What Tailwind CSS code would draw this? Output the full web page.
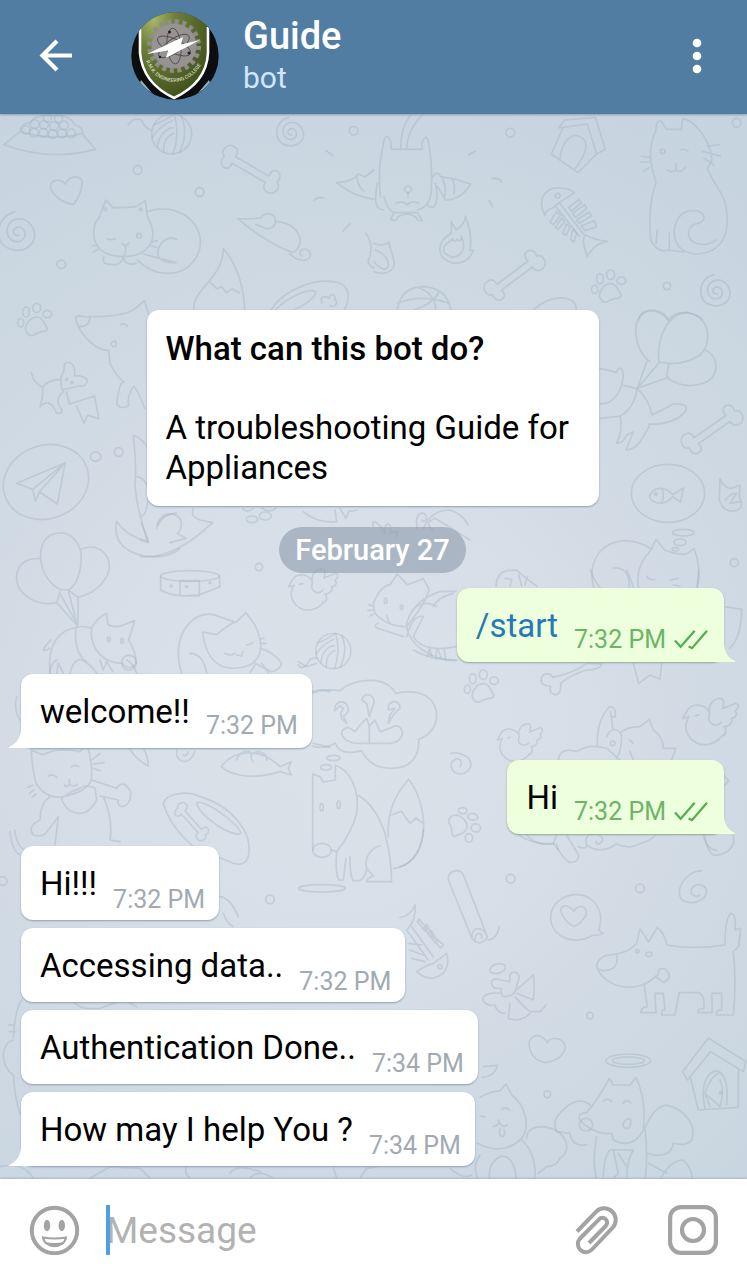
<!DOCTYPE html>
<html lang="en">
<head>
<meta charset="utf-8">
<meta name="viewport" content="width=device-width, initial-scale=1">
<title>Guide</title>
<script src="https://cdn.jsdelivr.net/npm/@tailwindcss/browser@4"></script>
</head>
<body class="flex min-h-screen flex-col bg-[#d3dde6] font-[Roboto,'Liberation_Sans',sans-serif] text-black">

<header class="relative z-10 flex h-[114px] shrink-0 items-center bg-[#517da2] px-6 pb-[2px] shadow-[0_1px_2px_#8c9cab]">
  <button type="button" aria-label="Back" class="flex size-16 items-center justify-center">
    <svg class="size-9" viewBox="0 0 36 36" fill="none" stroke="#fff" stroke-width="4.2"><path d="M34 17.5H5M19 3 4.500 17.500 19 32"/></svg>
  </button>
  <svg class="ml-[43px] size-[88px] shrink-0" viewBox="131 11 88 88">
    <defs>
      <clipPath id="disc"><circle cx="175" cy="55" r="43.700"/></clipPath>
      <radialGradient id="olive" cx=".2" cy=".12" r=".9"><stop offset="0" stop-color="#a9b76c"/><stop offset=".35" stop-color="#6f7f3a"/><stop offset="1" stop-color="#44541e"/></radialGradient>
      <path id="motto" d="M146 60Q154 80 174 81Q194 80 204 58"/>
    </defs>
    <g clip-path="url(#disc)">
      <rect x="131" y="11" width="88" height="88" fill="#0b0d0e"/>
      <path d="M131 11H219V26H208L175 15 140 30H131Z" fill="#6f8038"/>
      <path d="M141 79l11 13-13-8zM209 79l-11 13 13-8z" fill="#8eb0c4"/>
      <path d="M140 8H208V52C207 74 193 88 174 97C155 88 142 74 140 52Z" fill="url(#olive)"/>
      <path d="M140 28V52C142 74 155 88 174 97C193 88 207 74 208 52V26" fill="none" stroke="#fff" stroke-width="2.600"/>
      <circle cx="174" cy="45" r="24.500" fill="none" stroke="#8f8d8c" stroke-width="5" stroke-dasharray="4 3.696"/>
      <circle cx="174" cy="45" r="22.500" fill="#969392"/>
      <g fill="none" stroke="#4b4646" stroke-width=".8"><ellipse cx="174" cy="45" rx="18" ry="7" transform="rotate(25 174 45)"/><ellipse cx="174" cy="45" rx="18" ry="7" transform="rotate(85 174 45)"/><ellipse cx="174" cy="45" rx="18" ry="7" transform="rotate(145 174 45)"/></g>
      <circle cx="169.500" cy="31" r="1.500" fill="#222"/><circle cx="189" cy="52" r="1.500" fill="#222"/><circle cx="160" cy="56" r="1.300" fill="#222"/>
      <path d="M147 53L183 36 181 43.500 200 39 166 57 168 49.500Z" fill="#fff"/>
      <text class="font-medium" font-size="5" fill="#d3d8bf"><textPath href="#motto">R.M.K. ENGINEERING COLLEGE</textPath></text>
    </g>
  </svg>
  <div class="ml-6 min-w-0 flex-1">
    <h1 class="text-[38px] leading-[44px] font-medium text-white">Guide</h1>
    <p class="text-[30px] leading-[40px] text-[#d0e6fa]">bot</p>
  </div>
  <button type="button" aria-label="More options" class="flex h-16 w-[52px] items-center justify-center">
    <svg class="h-9 w-3" viewBox="0 0 12 36" fill="#fff"><circle cx="6" cy="5" r="4.300"/><circle cx="6" cy="18" r="4.300"/><circle cx="6" cy="31" r="4.300"/></svg>
  </button>
</header>

<main class="relative isolate flex flex-1 flex-col justify-end overflow-hidden pr-[23px] pb-[13px] pl-[21px]">
  <svg class="absolute inset-0 -z-10 size-full" viewBox="0 114 747 1065" preserveAspectRatio="xMidYMid slice" aria-hidden="true">
    <defs>
      <radialGradient id="wall" gradientUnits="userSpaceOnUse" cx="330" cy="730" r="720"><stop offset="0" stop-color="#dbe2ea"/><stop offset=".35" stop-color="#d6dee7"/><stop offset=".65" stop-color="#cdd8e2"/><stop offset="1" stop-color="#c6d4df"/></radialGradient>
      <path id="bone" d="M-58-10L58-10C50-45 98-42 88-6C110 0 100 40 72 34C58 32 58 20 58 12L-58 12C-50 45-98 42-88 6C-110 0-100-40-72-34C-58-32-58-20-58-10Z"/>
      <g id="paw"><path d="M-30 20C-28 2-12-16 5-15C22-14 26 4 36 20C34 32 18 26 4 34C-12 48-26 38-30 20Z"/><ellipse cx="-44" cy="2" rx="9" ry="13"/><ellipse cx="-28" cy="-30" rx="10" ry="15"/><ellipse cx="4" cy="-42" rx="12" ry="14"/><ellipse cx="36" cy="-24" rx="13" ry="11"/></g>
      <path id="swirl" d="M4 8C-8 12-14-4 0-10C20-12 24 16 4 22C-26 26-32-14-8-26C26-38 48 0 34 24C14 52-32 44-40 14C-46-12-34-36-6-44"/>
      <path id="bird" d="M-48-22L-62-18-52-36C-40-55-8-50-2-28C-8-50 10-66 26-62C32-54 28-46 26-40L56-52C66-48 60-38 54-34C62-28 54-18 46-18C50-8 40 0 30 0C36 8 34 20 26 20C10 42-20 46-38 32C-60 14-58-8-48-22M-2-28C-10-8 10 4 24-10M-34-24l8-2"/>
      <g id="yarn"><circle r="60"/><path d="M-52-28C-10-45 0-55 6-60M-58 10C-45-15-10-36 2-40M-42 40C-40 0-10-20 4-18M-24 54C-26 20-10 4 6-2M8-58C20-20 18 20 4 60M28-54C44-20 40 20 24 54"/></g>
    </defs>
    <rect x="-400" y="-200" width="1600" height="1800" fill="url(#wall)"/>
    <g fill="none" stroke="#9dafc1" stroke-opacity=".38" stroke-width="5" stroke-linecap="round" stroke-linejoin="round">
      <!-- upper left -->
      <g transform="translate(0 110) scale(.3333)">
        <path d="M12 104L60 65Q160 95 245 70L286 118Q150 155 12 104ZM60 65Q62 40 90 38Q110 10 160 18Q210 12 225 45Q250 50 248 72"/>
        <g><circle cx="78" cy="60" r="12"/><circle cx="102" cy="68" r="13"/><circle cx="130" cy="68" r="13"/><circle cx="158" cy="72" r="13"/><circle cx="186" cy="70" r="13"/><circle cx="214" cy="70" r="13"/><circle cx="104" cy="42" r="13"/><circle cx="132" cy="44" r="13"/><circle cx="162" cy="48" r="13"/><circle cx="192" cy="46" r="13"/><circle cx="142" cy="24" r="12"/><circle cx="176" cy="26" r="12"/></g>
        <use href="#yarn" x="515" y="72"/><path d="M452 60Q430 50 425 30Q400 20 384 45"/>
        <use href="#swirl" x="872" y="66"/><use href="#swirl" stroke-width="4" transform="translate(52 365) scale(1.35)"/>
        <use href="#bone" transform="translate(752 178) rotate(30)"/>
        <path d="M152 236C148 205 180 205 196 222C212 190 252 196 246 225Q240 260 220 284Q170 275 152 236Z"/>
        <circle cx="413" cy="180" r="13"/><circle cx="599" cy="246" r="13"/><circle cx="184" cy="463" r="13"/><circle cx="1061" cy="62" r="13"/>
        <path d="M978 122L998 136M942 272Q950 260 972 264M1030 364L1050 340"/>
        <path d="M296 325L318 270 338 292Q370 295 408 290L436 272 442 320Q470 370 452 400Q430 440 370 440Q300 440 284 390Q274 350 296 325ZM322 386Q335 392 346 386M366 400L376 408 386 400M376 408Q380 425 372 438M278 408L290 406M280 426L294 418M456 396L472 392M454 408L470 412M312 440Q302 465 335 463Q365 468 370 440Q375 470 410 460M444 304C560 270 630 370 590 440C550 510 460 500 412 450M530 388C500 375 470 400 474 440Q490 460 528 458L430 432"/>
        <circle cx="417" cy="377" r="7"/><circle cx="316" cy="298" r="4"/><circle cx="422" cy="298" r="4"/>
        <path d="M714 326Q760 328 784 322C800 300 830 316 826 334C900 340 920 400 880 428C820 410 740 350 714 326ZM784 350C800 362 828 354 826 334M868 430C900 465 945 450 928 424C910 405 890 430 906 438M768 344l14 4"/>
        <path d="M582 600C576 560 620 530 652 480Q670 450 670 416C710 460 732 530 734 600M632 518L650 536 664 530 680 548 696 536 718 548"/>
        <path d="M812 600C860 530 960 500 1020 520C1062 540 1044 590 1020 620M826 600C870 555 930 535 946 545C950 560 910 590 880 600M966 578C958 560 975 555 988 565C990 545 1010 555 1004 568C1020 580 1000 595 990 586"/>
        <path d="M1010 218Q1060 215 1075 192L1096 200 1122 180M1010 218Q1060 260 1122 268M1070 200Q1075 230 1090 242M1098 370Q1120 400 1110 440 1095 460 1122 475"/>
      </g>
      <!-- upper right -->
      <g transform="translate(374 110) scale(.3333)">
        <path d="M80 116Q80 50 110 15M98 116Q100 60 145 15M52 118H144C142 80 162 70 164 100Q176 160 172 240Q170 290 130 300M52 118C52 80 36 70 30 90L18 160Q14 230 20 260M10 220C0 280 5 300 30 300M30 260Q40 300 60 308H130L145 332M60 308L50 328Q66 338 72 320Q100 305 124 320 132 336 145 332M66 280Q90 270 100 285 110 270 134 280M184 220Q196 270 180 290 164 296 158 280M176 200Q190 180 200 200L245 208 290 222Q260 270 215 270L190 230M205 204Q220 240 210 262M236 210Q245 230 240 250"/><circle cx="102" cy="238" r="10"/><path d="M102 248V262"/>
        <circle cx="409" cy="68" r="13"/><circle cx="1088" cy="38" r="13"/><circle cx="879" cy="528" r="11"/>
        <path d="M284 134L304 124M354 206Q375 202 382 216M346 272L356 290"/>
        <path d="M240 460C190 450 180 400 232 370V334Q240 350 246 360Q276 340 274 318C290 360 294 390 288 422L298 420Q286 460 240 460ZM210 428C205 400 225 400 236 386Q238 400 250 388Q262 400 262 378C280 420 260 440 232 442Z"/>
        <path d="M0 400Q20 410 40 400L44 396C50 430 64 440 60 470Q40 500 0 485M5 420Q30 430 40 450 50 475 30 478Q10 470 0 455"/>
        <path d="M554 54L572 30 664 22 694 118 668 132 640 42 554 54ZM566 56L532 132 612 188 668 132M558 150C560 100 590 70 612 78C650 90 640 130 602 178"/>
        <path d="M512 316C490 270 510 230 560 234Q590 236 602 248L556 278 536 294Q516 300 512 316ZM556 278L628 372M546 290L616 378M640 440C630 410 622 390 634 374Q660 390 700 394Q660 400 640 440Z"/><circle cx="551" cy="257" r="7"/>
        <path d="M584 292L616 268 622 278 592 304ZM596 310L632 284 638 296 604 322ZM608 330L646 306 652 318 616 340ZM622 348L660 332 668 350 634 362ZM548 304L528 336 538 344 560 316ZM564 324L544 352 552 358 572 336ZM578 342L566 370 576 376 588 352ZM596 358L590 388 600 396 608 370Z"/>
        <use href="#bone" transform="translate(422 496) rotate(-37)"/><use href="#paw" x="706" y="536"/><use href="#swirl" transform="translate(1026 542) scale(1.1)"/>
        <path d="M70 600Q80 530 150 530Q220 535 230 600M70 580Q140 550 225 580M130 532Q185 550 185 600M195 545Q180 580 120 600M478 600Q520 560 570 564 610 570 606 600M795 630Q800 600 840 600 870 604 884 630M884 630Q900 605 940 608 975 615 985 630"/>
        <path d="M846 60Q846 28 862 34L878 58H922L926 26C960 30 1010 90 1014 150L1000 175C1020 230 1060 250 1060 330C1060 400 1020 430 970 432C900 430 890 370 910 330C930 290 990 295 990 325C985 350 950 330 944 365C940 410 1000 410 1026 390M846 60C820 120 828 160 846 215C824 280 826 350 830 390Q850 430 880 420L930 426M850 362L846 400M886 366V415M880 180Q890 190 906 180Q925 190 934 172M906 180V160M920 120Q930 114 942 124M802 138L826 142M800 156H826M808 184L826 172M1000 108L1036 104M984 124L1040 138M990 144L1020 166"/><circle cx="866" cy="124" r="7"/>
      </g>
      <!-- left column -->
      <g transform="translate(0 300) scale(.3333)">
        <use href="#paw" x="106" y="66"/>
        <path d="M226 54Q230 44 250 50Q360 52 400 30L434 2 446 44M226 54C240 110 290 150 326 152L330 190Q350 230 372 246Q360 240 350 310Q360 330 386 318Q380 290 400 260 410 260 434 325M270 50Q270 80 236 80M362 74Q372 66 382 78M346 122Q324 130 340 140Q354 140 346 122"/>
        <path d="M94 218Q100 250 128 262Q140 240 182 238L192 210Q190 180 214 190Q226 200 224 228Q250 224 262 240Q260 262 236 258L186 270 182 238M128 262Q130 290 120 320Q150 290 170 340 190 340 186 330Q160 300 190 275M200 276L208 312 284 288M230 318L252 370 262 346 276 350 296 356 284 288"/><circle cx="200" cy="238" r="3"/><circle cx="216" cy="248" r="3"/>
        <ellipse cx="138" cy="546" rx="130" ry="110" transform="rotate(-20 138 546)"/>
        <path d="M50 550L196 488 172 612 118 576 196 488 98 568ZM98 568L106 604 118 576"/>
        <ellipse cx="287" cy="470" rx="16" ry="14"/><circle cx="356" cy="456" r="13"/>
        <path d="M400 406C420 410 435 430 445 445M400 406Q410 490 405 560 415 650 445 724Q380 710 350 664Q340 710 370 740C420 780 500 780 540 745M412 530Q450 540 444 600 440 640 425 650M474 676Q490 640 530 640"/>
        <path d="M180 868C120 840 100 740 150 706C210 680 250 730 243 790Q236 850 206 870ZM118 776C50 770 30 840 70 880Q110 920 170 908L180 875M240 750C290 720 350 770 320 830Q290 880 234 892L208 872M170 908L230 975M234 892V975M180 880L230 970 206 875"/>
        <path d="M150 1120C140 1030 180 990 230 982Q250 976 274 985M150 1045Q120 1060 135 1040L152 1020M228 980Q220 1060 260 1085M210 1120Q220 1080 240 1078 270 1090 290 1120M170 1120L175 1090 190 1120M274 985Q290 955 320 940L324 974Q350 985 370 975L404 962 386 1020Q410 1060 408 1090Q390 1115 366 1090C320 1090 270 1060 274 985M300 1080L310 1110 320 1085 338 1115"/><circle cx="387" cy="1088" r="22"/><ellipse cx="326" cy="1018" rx="4" ry="7"/><ellipse cx="366" cy="1022" rx="4" ry="7"/>
      </g>
      <!-- right column -->
      <g transform="translate(590 300) scale(.3333)">
        <path d="M180 185C130 150 120 50 170 34Q210 28 236 62M206 186C200 100 240 40 290 38C360 45 370 130 330 165Q280 200 206 186ZM345 150C390 170 390 230 340 250Q280 270 230 232L236 194M170 185L142 265 236 232M206 190L142 265"/>
        <path d="M28 206Q60 210 78 218Q92 190 100 220Q98 280 60 305Q40 315 28 310M100 256L142 266Q130 330 90 348L28 356M90 348Q100 390 80 430Q100 430 110 405L130 396 108 450Q130 450 150 425 180 380 178 372Q250 375 286 335Q300 310 250 312L186 345Q178 300 142 266"/>
        <use href="#bone" transform="translate(366 388) rotate(-35)"/>
        <ellipse cx="234" cy="580" rx="110" ry="87"/><path d="M178 590C190 560 225 556 248 584L280 564 272 606 248 590C225 618 190 615 178 590ZM215 565Q225 590 215 608"/><circle cx="198" cy="582" r="4"/>
        <path d="M390 536Q400 560 420 566L450 556 448 590Q465 620 440 632 400 640 388 600ZM406 600Q420 580 440 580L420 610 450 605"/>
        <ellipse cx="280" cy="698" rx="32" ry="10"/><ellipse cx="270" cy="727" rx="18" ry="10"/><ellipse cx="256" cy="748" rx="10" ry="5"/><circle cx="433" cy="788" r="12"/>
        <path d="M12 865C-10 790 30 722 110 722Q150 725 180 745M146 865Q135 800 180 755L198 718 224 750Q260 765 290 762L312 746Q335 800 322 865M70 804Q120 800 118 865M170 830Q180 842 194 838M250 855L270 858"/>
      </g>
      <!-- middle -->
      <g transform="translate(140 490) scale(.3333)">
        <path d="M0 200Q100 210 218 98L180 90Q150 80 160 55M50 115C55 60 120 60 124 100Q125 120 112 130L138 145 90 158M0 150L25 158 5 100"/>
        <ellipse cx="336" cy="88" rx="17" ry="10"/><ellipse cx="376" cy="78" rx="18" ry="12"/><path d="M308 55Q320 72 340 55M365 55Q390 70 408 55M490 65Q530 100 590 96L585 60M600 55L618 85 626 65 652 60"/>
        <circle cx="357" cy="231" r="11"/>
        <ellipse cx="150" cy="258" rx="88" ry="16"/><path d="M62 258V300Q100 325 178 314L240 290 238 258M120 272H178V318H120Z"/><circle cx="94" cy="288" r="3"/><circle cx="140" cy="290" r="3"/><circle cx="210" cy="278" r="3"/>
        <path d="M125 550C90 450 150 360 220 374L280 395M188 426L230 434Q270 400 290 395L318 368 345 405C370 460 370 500 330 525C260 550 200 530 188 426ZM150 490Q190 490 200 550M255 490Q270 500 285 490M320 465Q330 465 338 458M290 495L305 498 308 485M360 475Q400 485 425 520 420 540 395 545L345 520M362 448L372 444M364 460L378 460M345 525L330 548M365 520L385 548"/>
        <use href="#bird" stroke-width="4" transform="translate(520 312) scale(1.2)"/>
        <use href="#yarn" transform="translate(580 483) scale(.88)"/><path d="M530 505Q510 500 500 525 485 540 474 525"/>
        <path d="M700 340Q720 290 750 284L772 252 802 284 850 266 868 300Q850 350 800 410Q740 410 705 370ZM715 400Q690 410 730 420L790 440M740 376Q745 400 760 405M686 345L700 348M684 362L700 360M690 378L702 372M800 400Q820 330 900 305L948 304M800 400C800 460 870 510 948 512M800 440Q820 370 850 380L820 440Q850 490 948 470M830 350Q860 330 890 350M880 350Q895 320 940 310M870 470L862 500M890 478L888 508M912 475L918 512"/><ellipse cx="737" cy="332" rx="4" ry="8"/><ellipse cx="785" cy="352" rx="4" ry="7"/>
        <path d="M832 118C820 60 860 60 860 85Q855 100 845 90M850 118Q870 60 930 60 965 70 985 105M880 120Q850 100 885 85L975 140 990 150M700 110C690 80 720 100 735 130C730 90 760 95 750 130Q780 115 768 140"/>
      </g>
      <!-- around outgoing messages -->
      <g transform="translate(440 570) scale(.3333)">
        <path d="M168 48Q170 10 200 2L230 0Q250 20 292 50M195 25L215 28 210 50M236 14L245 48M262 20L255 45M452 0Q460 30 480 52M580 52Q570 20 560 0M690 30L714 25M776 0Q776 30 770 50"/>
        <use href="#paw" x="126" y="356"/>
        <path d="M304 325C310 305 335 310 338 322Q400 310 440 280L486 282Q480 300 440 300 390 315 362 340Q365 375 345 374Q325 370 332 348 300 350 304 325M580 280L596 340 630 315 660 328 665 280M855 110L905 118Q905 200 870 235"/>
        <use href="#bird" stroke-width="4" transform="translate(240 530) scale(1.1)"/><use href="#bird" stroke-width="4" transform="translate(812 470) scale(1.35)"/>
        <path d="M32 550C60 545 98 560 92 590C75 625 30 615 34 580C45 555 75 570 60 590"/>
        <path d="M472 530C470 460 490 430 508 410Q530 410 526 440Q512 445 512 425L518 475M355 570Q360 530 410 545Q450 520 500 535L540 570M500 500Q520 460 545 495Q545 540 530 565M540 490Q560 470 600 470L628 448 640 480Q670 500 670 535L708 535 695 570M568 510L580 520M570 545L580 570"/><circle cx="518" cy="520" r="7"/>
        <g transform="translate(66 766) rotate(95)"><use href="#paw"/></g>
        <path d="M260 795Q290 830 340 820L355 840M790 795Q800 840 830 840M855 620L866 632 855 645"/>
      </g>
      <!-- lower left -->
      <g transform="translate(0 660) scale(.3333)">
        <path d="M50 110Q40 150 60 180M150 40Q150 10 170 0M380 0Q400 10 410 40M895 5L920 20 950 10M935 95Q960 85 990 95M940 250L990 262"/>
        <path d="M94 270L128 284Q180 260 238 275L262 255Q275 300 275 340C280 380 240 400 190 410Q140 420 108 370 95 320 94 270ZM146 348Q158 340 170 352M214 320Q225 312 236 320M208 358V372Q220 385 232 372M208 372Q200 385 194 375M276 300L300 280M280 312L312 308M278 325L300 332M84 382L98 376M88 400L102 390M96 412L108 402M275 360L350 385Q370 355 392 395Q395 430 370 440Q350 440 355 420L300 408M150 410Q120 430 120 480Q80 500 100 525 130 535 145 510L175 470 165 555M184 415Q220 390 240 385 260 370 285 385L290 420Q270 460 240 460Q200 460 184 415M310 410Q340 480 330 540L360 545M30 515Q35 570 60 585M44 510Q50 560 75 570"/>
        <path d="M390 268Q410 300 445 318Q445 290 430 266M530 270C525 310 570 320 584 275M550 285Q560 290 565 275"/>
        <path d="M664 320C700 270 780 260 840 320L874 305 865 325 874 345 840 335C780 355 700 355 664 320ZM710 300Q720 270 750 275M760 305Q740 280 775 275Q805 280 800 300"/>
        <path d="M490 430C500 400 560 390 600 410C700 440 760 520 745 590Q735 620 700 610L580 560Q510 500 490 430ZM590 430C600 410 720 490 722 520C700 535 600 470 590 430Z"/><use href="#bone" stroke-width="7" transform="translate(575 485) rotate(48) scale(.65)"/>
        <circle cx="810" cy="718" r="13"/><circle cx="8" cy="663" r="13"/><path d="M657 710Q690 710 715 770M670 760Q680 790 700 800"/>
      </g>
      <!-- thought cloud and fox -->
      <g transform="translate(300 650) scale(.3333)">
        <path d="M36 130Q70 115 120 122Q160 85 230 92Q270 100 288 130C360 115 410 140 410 200Q405 250 356 268Q360 330 310 350C250 365 205 345 185 302Q120 320 106 280Q70 300 38 288"/>
        <path d="M104 182C100 150 145 145 145 180Q140 195 130 198L140 220 125 205 122 190 130 175 120 168ZM186 150C190 125 225 130 222 160Q212 180 208 200L200 160ZM265 180C260 150 300 145 300 175Q280 190 265 220L270 195 285 175ZM130 262Q115 240 145 232L165 245 180 225 200 205 208 228 225 210 240 245L270 235Q300 215 308 250Q300 285 250 280H165Q140 275 130 262ZM208 228V275"/>
        <ellipse cx="100" cy="324" rx="20" ry="8"/><ellipse cx="78" cy="352" rx="16" ry="8"/>
        <path d="M38 600V372L60 380 70 396 106 390V346C150 360 180 420 170 490Q155 550 110 605L96 600M110 605Q105 660 115 690H130L138 625M150 620Q150 680 160 692H180Q195 680 200 660M175 436C230 470 270 540 275 695L200 695Q200 685 220 678L200 655C190 620 220 590 240 588M265 560C260 480 290 430 326 388C360 430 375 500 370 550Q350 650 280 655M275 495L304 484 330 520 348 504 370 520"/>
        <ellipse cx="66" cy="601" rx="28" ry="21"/><ellipse cx="65" cy="472" rx="5" ry="11"/><ellipse cx="116" cy="464" rx="5" ry="11"/><ellipse cx="66" cy="715" rx="70" ry="11"/>
        <path d="M340 0Q390 30 470 30M390 0L396 25M415 0L425 28"/>
      </g>
      <!-- lower right -->
      <g transform="translate(400 830) scale(.3333)">
        <path d="M350 12Q400 45 460 42L470 15M470 42Q480 80 510 98 540 95 535 75L500 15M535 50Q560 60 560 45Q550 10 590 12 620 25 600 40 590 45 588 35M560 45Q600 75 650 42Q690 60 720 40 750 35 770 12M914 15Q920 60 940 76Q990 75 1002 35L1000 12M0 110Q65 90 70 0"/>
        <path d="M145 150C140 120 185 110 192 140L262 320Q240 355 216 325ZM216 325C210 290 250 285 262 320M225 330C225 305 250 305 245 325M262 330Q290 330 298 290"/>
        <circle cx="332" cy="146" r="13"/><circle cx="720" cy="175" r="13"/><circle cx="570" cy="557" r="10"/><circle cx="442" cy="793" r="10"/>
        <path d="M580 315C520 350 450 320 452 258C460 180 590 165 602 260Q602 285 596 300L610 310Q595 318 580 315ZM522 290C480 265 470 225 500 228Q515 232 522 245Q530 225 552 232C570 250 550 275 522 290Z"/>
        <path d="M905 122C850 125 820 190 850 212C890 230 930 200 918 175C900 155 870 165 874 190Q885 205 900 195"/>
        <path d="M590 405C600 370 640 375 650 372Q690 365 710 340L720 296 746 336 772 292Q795 310 800 345Q880 360 975 345Q975 270 992 250Q1010 250 1005 300L1022 295 1016 350 1000 365Q1010 460 1000 555H950Q945 540 965 540V490H935L937 548H895Q890 535 912 535Q915 480 880 488H838L825 555H785Q785 535 795 540L790 490H765L768 548H722Q725 530 742 530L732 460M650 372Q660 420 610 422 590 420 590 405M592 415C620 480 720 490 765 440Q780 435 775 420 795 410 802 425 815 440 800 450 790 465 780 448L765 440"/><circle cx="712" cy="364" r="5"/><ellipse cx="747" cy="373" rx="9" ry="7"/>
        <path d="M442 638C420 600 380 620 388 650Q395 690 436 698Q490 690 496 650C490 620 450 620 442 638Z"/>
        <ellipse cx="685" cy="692" rx="67" ry="20"/><ellipse cx="685" cy="692" rx="48" ry="11"/>
        <path d="M848 725L925 624 1038 695 1030 725 932 665 862 750ZM872 745L895 840 1015 832V715M915 835C900 770 920 725 950 722C980 730 985 780 980 825M930 830L915 790Q930 740 960 726M915 790L960 830Q975 780 960 750"/><circle cx="962" cy="788" r="3"/>
        <path d="M0 262Q30 260 45 225Q50 270 20 300M20 300L85 390M35 290L100 380M52 275L58 268 82 298 76 304ZM72 292L80 284 98 318 92 322ZM84 310L94 302 112 334 106 338ZM96 326L104 322 130 344 122 354ZM25 340L65 345M28 360L70 375M35 385L75 395M50 425Q80 405 100 400L140 370Q155 430 100 445Q70 445 50 425Z"/><circle cx="120" cy="410" r="6"/>
        <ellipse cx="293" cy="416" rx="24" ry="14" transform="rotate(-15 293 416)"/><path d="M285 475C265 460 275 440 300 450L330 455Q325 420 350 428Q365 440 350 465Q350 500 310 500 300 490 305 475ZM350 480L400 435Q405 470 400 510L350 490M305 490Q250 485 248 510 260 530 285 525 290 550 315 550M345 500Q370 530 390 545L420 545 438 525M330 520L325 565Q360 580 390 550"/>
        <path d="M240 802Q270 785 300 782L318 762 335 795C380 830 390 890 365 925Q310 980 232 940M240 858L256 860M306 838Q316 828 328 840M296 870Q300 885 280 890M300 880Q310 895 322 885M300 895Q295 920 308 920 318 915 312 898M250 710L292 706Q285 740 246 742M380 925Q380 890 430 890C500 900 520 960 480 985Q470 1010 440 1010L415 1030M365 930Q410 970 405 1050M270 1050Q260 1000 300 980Q340 970 350 1050M235 1050Q215 1010 240 975M150 1015Q190 1050 215 1035"/>
        <path d="M540 870Q530 850 560 848Q600 800 628 745L640 765H690L708 742Q740 810 730 900Q700 960 640 930L635 910Q580 915 540 870ZM610 815Q620 800 635 815M670 820Q680 805 692 818M670 880Q680 860 692 868Q695 895 680 896Q668 895 670 880M570 825Q540 800 500 830 450 870 470 905L510 910Q515 950 560 945M735 895Q760 830 800 825C860 840 890 890 875 930Q860 950 820 940Q815 980 760 975L740 970M590 920Q575 990 590 1050M735 895Q745 980 735 1050M610 1050Q610 980 630 960L700 960Q680 990 680 1050M640 960L655 1030 635 1050M655 970L680 1010M780 1050Q810 990 850 990 880 1020 875 1050M745 1000L800 1030"/><ellipse cx="558" cy="884" rx="20" ry="19"/>
      </g>
      <!-- behind incoming messages -->
      <g transform="translate(0 910) scale(.3333)">
        <path d="M65 270Q45 300 40 380M25 345H45M28 365H48M40 390C0 400 0 470 40 495Q45 570 60 610M220 275Q235 300 300 295L370 270 410 290M0 770Q70 755 100 805M270 805L330 770 420 775 450 805M560 770Q550 790 570 805M690 790Q710 760 780 785M750 805Q775 775 820 805M1000 770L1010 805M1080 805L1100 775 1130 770"/>
      </g>
    </g>
  </svg>

  <section class="w-[452px] max-w-full self-center rounded-xl bg-white px-[19px] pt-[19px] pb-[18px] text-[33px] leading-[40px] shadow-[0_1px_2px_#8fa0b0]">
    <h2 class="font-medium">What can this bot do?</h2>
    <p class="mt-[39px]">A troubleshooting Guide for Appliances</p>
  </section>

  <p class="mt-[21px] self-center rounded-full bg-[#8c9bab]/60 px-4 text-[29px] leading-[46px] font-medium text-white">February 27</p>

  <ol class="mt-[15px] flex flex-col gap-3">
    <li class="relative flex h-[74px] items-end self-end rounded-xl bg-[#eeffde] pr-4 pl-[19px] shadow-[0_1px_2px_#8fa89a]">
      <a href="#" class="mb-4 text-[33px] leading-[40px] text-[#2678b6]">/start</a>
      <time class="mb-2 ml-4 text-[25px] leading-[29px] text-[#6cb566]">7:32 PM</time>
      <svg class="mb-[12px] ml-2 h-[21px] w-[34px]" viewBox="704 174 102 62" fill="none" stroke="#54b04f" stroke-width="7"><path d="M707 208L724 227 766 179M748 226L758 231 803 179"/></svg>
      <svg class="absolute right-[-11px] bottom-0 h-5 w-6" viewBox="0 0 24 20" fill="#eeffde"><path d="M0 0H13C13 10 17 16 24 19V20H0Z"/></svg>
    </li>
    <li class="relative flex h-[74px] items-end self-start rounded-xl bg-white pr-[14px] pl-[19px] shadow-[0_1px_2px_#8fa0b0]">
      <svg class="absolute bottom-0 left-[-12px] h-5 w-6" viewBox="0 0 24 20" fill="#fff"><path d="M24 0H12C12 10 7 16 0 19V20H24Z"/></svg>
      <p class="relative mb-4 text-[33px] leading-[40px]">welcome!!</p>
      <time class="mb-2 ml-4 text-[25px] leading-[29px] text-[#a1aab3]">7:32 PM</time>
    </li>
    <li class="relative flex h-[74px] items-end self-end rounded-xl bg-[#eeffde] pr-4 pl-[19px] shadow-[0_1px_2px_#8fa89a]">
      <p class="mb-4 text-[33px] leading-[40px]">Hi</p>
      <time class="mb-2 ml-4 text-[25px] leading-[29px] text-[#6cb566]">7:32 PM</time>
      <svg class="mb-[12px] ml-2 h-[21px] w-[34px]" viewBox="704 174 102 62" fill="none" stroke="#54b04f" stroke-width="7"><path d="M707 208L724 227 766 179M748 226L758 231 803 179"/></svg>
      <svg class="absolute right-[-11px] bottom-0 h-5 w-6" viewBox="0 0 24 20" fill="#eeffde"><path d="M0 0H13C13 10 17 16 24 19V20H0Z"/></svg>
    </li>
    <li>
      <ol class="flex flex-col items-start gap-2">
        <li class="flex h-[74px] items-end rounded-xl bg-white pr-[14px] pl-[19px] shadow-[0_1px_2px_#8fa0b0]">
          <p class="mb-4 text-[33px] leading-[40px]">Hi!!!</p>
          <time class="mb-[6px] ml-4 text-[25px] leading-[29px] text-[#a1aab3]">7:32 PM</time>
        </li>
        <li class="flex h-[74px] items-end rounded-xl bg-white pr-[14px] pl-[19px] shadow-[0_1px_2px_#8fa0b0]">
          <p class="mb-4 text-[33px] leading-[40px]">Accessing data..</p>
          <time class="mb-[6px] ml-4 text-[25px] leading-[29px] text-[#a1aab3]">7:32 PM</time>
        </li>
        <li class="flex h-[74px] items-end rounded-xl bg-white pr-[14px] pl-[19px] shadow-[0_1px_2px_#8fa0b0]">
          <p class="mb-4 text-[33px] leading-[40px]">Authentication Done..</p>
          <time class="mb-[6px] ml-4 text-[25px] leading-[29px] text-[#a1aab3]">7:34 PM</time>
        </li>
        <li class="relative flex h-[74px] items-end rounded-xl bg-white pr-[14px] pl-[19px] shadow-[0_1px_2px_#8fa0b0]">
          <svg class="absolute bottom-0 left-[-12px] h-5 w-6" viewBox="0 0 24 20" fill="#fff"><path d="M24 0H12C12 10 7 16 0 19V20H24Z"/></svg>
          <p class="relative mb-4 text-[33px] leading-[40px]">How may I help You ?</p>
          <time class="mb-[6px] ml-4 text-[25px] leading-[29px] text-[#a1aab3]">7:34 PM</time>
        </li>
      </ol>
    </li>
  </ol>
</main>

<footer class="relative flex h-[101px] shrink-0 items-center bg-white pr-7 pl-[29px] shadow-[0_-1px_2px_#a9b5c0]">
  <button type="button" aria-label="Emoji" class="shrink-0">
    <svg class="size-[51px]" viewBox="29 1204 51 51" fill="none" stroke="#a3a3a3"><circle cx="54.500" cy="1230.500" r="22.700" stroke-width="4"/><g fill="#a3a3a3" stroke="none"><ellipse cx="47" cy="1225.500" rx="3.200" ry="5.800"/><ellipse cx="61.800" cy="1225.500" rx="3.200" ry="5.800"/></g><path d="M43 1237.500Q54.500 1239.500 66 1237.500C64 1249 45 1249 43 1237.500Z" stroke-width="2"/><path d="M45 1242Q54.500 1244 64 1242 60 1247 54.500 1247T45 1242Z" fill="#a3a3a3" stroke="none"/></svg>
  </button>
  <label class="relative ml-[26px] flex h-[50px] min-w-0 flex-1 items-center">
    <span class="absolute left-0 h-[50px] w-1 bg-[#4f9fe2]"></span>
    <input type="text" placeholder="Message" aria-label="Message" class="w-full bg-transparent pt-[3px] text-[37px] leading-[50px] outline-none placeholder:text-[#b2b2b2]">
  </label>
  <button type="button" aria-label="Attach" class="shrink-0">
    <svg class="h-[52px] w-12" viewBox="573 1204 48 52" fill="none" stroke="#a3a3a3" stroke-width="4"><path d="M577 1231.500L596 1211.800A11.500 11.500 0 0 1 612.800 1227.500L592 1249.500A8 8 0 0 1 580 1238.500L599 1219.300A4.700 4.700 0 0 1 605.800 1225.800L589 1243"/></svg>
  </button>
  <button type="button" aria-label="Camera" class="ml-[46px] shrink-0">
    <svg class="size-[52px]" viewBox="0 0 52 52" fill="none" stroke="#a3a3a3" stroke-width="4.200"><rect x="3.100" y="3.100" width="45.800" height="45.800" rx="11"/><circle cx="26" cy="26" r="11"/></svg>
  </button>
</footer>
</body>
</html>
